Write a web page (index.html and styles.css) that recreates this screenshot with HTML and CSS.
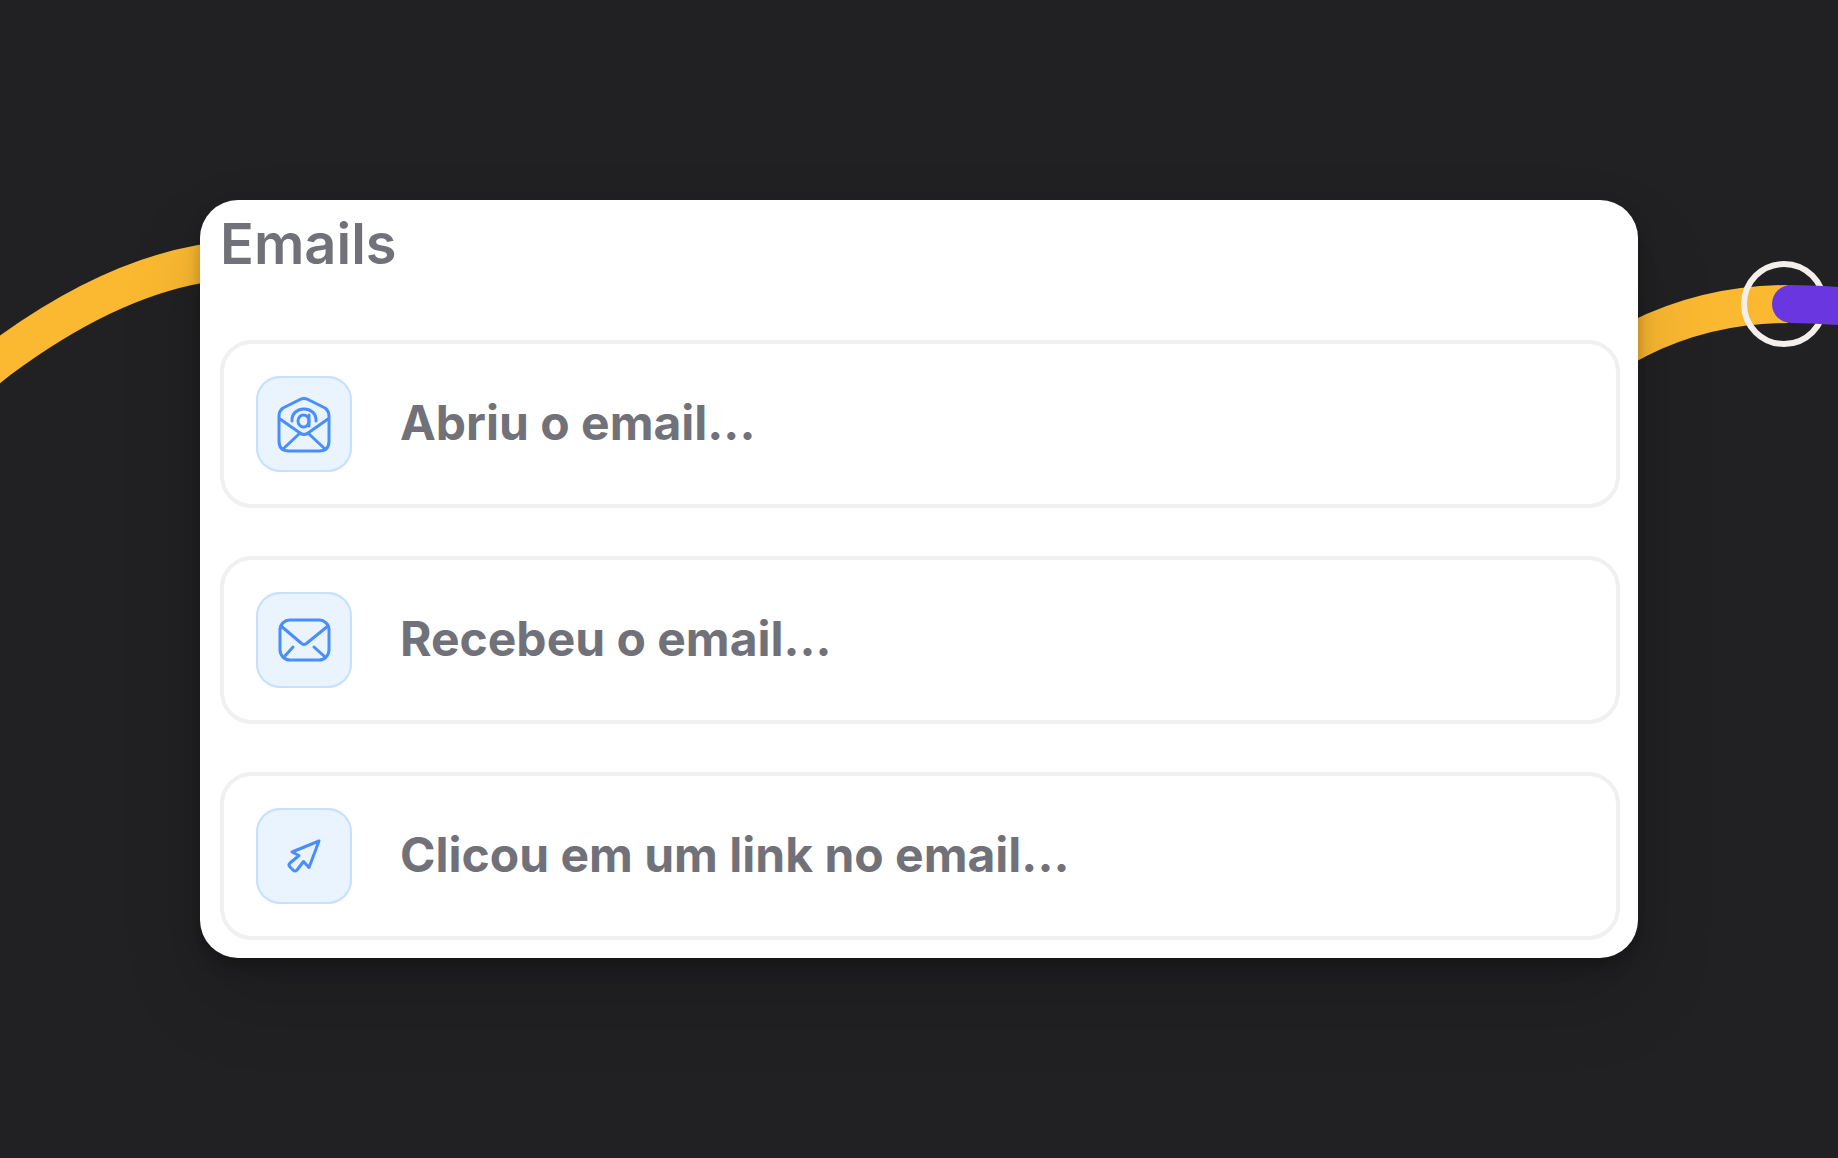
FILE: index.html
```html
<!DOCTYPE html>
<html lang="pt-BR">
<head>
    <meta charset="UTF-8">
    <meta name="viewport" content="width=device-width, initial-scale=1.0">
    <title>Emails</title>
    <link rel="stylesheet" href="styles.css">
</head>
<body>
    <svg class="line line-left" width="260" height="440" viewBox="0 0 260 440" aria-hidden="true">
        <path class="yellow" d="M-40 391L0 359Q105 281 200 264L260 254" />
    </svg>
    <svg class="line line-right" width="260" height="440" viewBox="0 0 260 440" aria-hidden="true">
        <path class="yellow" d="M0 371L60 339Q130 304 210 304" />
        <circle class="ring" cx="206" cy="304" r="40" />
        <path class="purple" d="M213 304Q240 304 300 309" />
    </svg>

    <main class="card">
        <h1 class="title">Emails</h1>
        <div class="options">
            <button class="option" type="button">
                <svg class="icon" viewBox="0 0 96 96" aria-hidden="true">
                    <path d="M23 40Q23 35 27 32L44 23.500Q48 21.500 52 23.500L69 32Q73 35 73 40V65Q73 75 63 75H33Q23 75 23 65Z" />
                    <path d="M24 43L44 57Q48 60 52 57L72 43M27 73L43 58M69 73L53 58" />
                    <path d="M36 45C35 29 61 29 60 45M53 39V50" />
                    <ellipse cx="47.500" cy="45" rx="5.500" ry="6" />
                </svg>
                <span>Abriu o email...</span>
            </button>
            <button class="option" type="button">
                <svg class="icon" viewBox="0 0 96 96" aria-hidden="true">
                    <rect x="24" y="28" width="49" height="40" rx="10" />
                    <path d="M25 34L45 51Q48 54 51 51L72 34M28 65L37 55M69 65L58 55" />
                </svg>
                <span>Recebeu o email...</span>
            </button>
            <button class="option" type="button">
                <svg class="icon" viewBox="0 0 96 96" aria-hidden="true">
                    <path d="M63 33L36 44L43 47.500L34 55Q32 57 34 59L37 62Q39 64 41 62L47.500 53.500L53 59.500Z" />
                </svg>
                <span>Clicou em um link no email...</span>
            </button>
        </div>
    </main>
</body>
</html>
```

FILE: styles.css
```css
* {
    box-sizing: border-box;
}

body {
    margin: 0;
    padding: 200px;
    min-height: 100vh;
    position: relative;
    overflow-x: hidden;
    background-color: #212123;
    font-family: Inter, sans-serif;
    color: #71717a;
}

/* flow lines behind the card */
.line {
    position: absolute;
    top: 0;
    fill: none;
    stroke-width: 38;
}

.line-left {
    left: 0;
}

.line-right {
    right: 0;
}

.yellow {
    stroke: #fbb931;
}

.purple {
    stroke: #6936e0;
    stroke-linecap: round;
}

.ring {
    stroke: #f5efeb;
    stroke-width: 6;
}

.card {
    position: relative;
    padding: 8px 18px 18px 20px;
    border-radius: 38px;
    background-color: #fff;
    box-shadow: 0 8px 16px rgba(0, 0, 0, 0.25), 0 40px 80px rgba(0, 0, 0, 0.15);
}

.title {
    margin: 0 0 60px;
    font-size: 56px;
    font-weight: 600;
    line-height: 72px;
}

.options {
    display: flex;
    flex-direction: column;
    gap: 48px;
}

.option {
    display: flex;
    align-items: center;
    gap: 48px;
    padding: 32px;
    border: 4px solid #f0f0f0;
    border-radius: 32px;
    background-color: #fff;
    color: inherit;
    font-family: inherit;
    font-size: 48px;
    font-weight: 700;
    line-height: 60px;
    text-align: left;
    cursor: pointer;
}

.option:hover {
    background-color: #fafafa;
}

.option span {
    padding-bottom: 2px;
}

.icon {
    flex-shrink: 0;
    width: 96px;
    height: 96px;
    border-radius: 24px;
    background-color: #e9f4ff;
    box-shadow: inset 0 0 0 2px #c6e0ff;
    fill: none;
    stroke: #4a8dff;
    stroke-width: 3;
    stroke-linecap: round;
    stroke-linejoin: round;
}
```
